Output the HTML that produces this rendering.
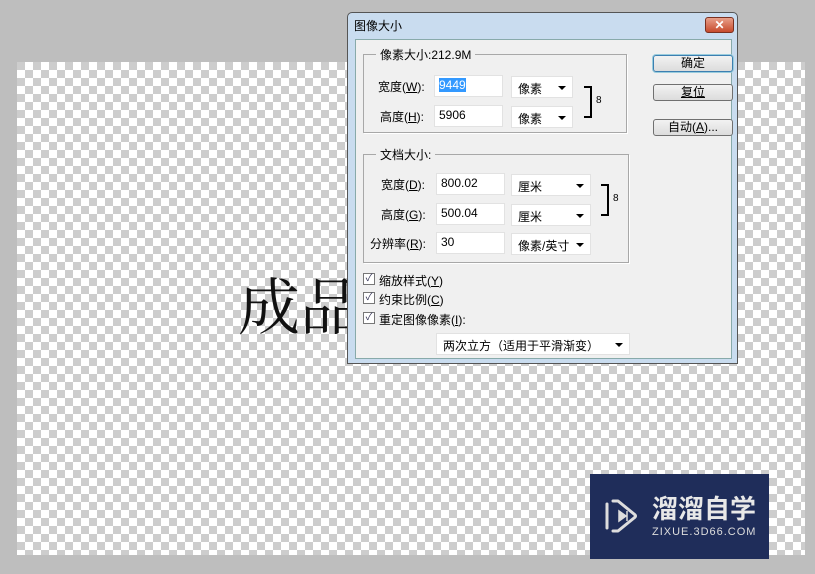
<!DOCTYPE html>
<html><head><meta charset="utf-8"><style>
*{margin:0;padding:0;box-sizing:border-box}
body{width:815px;height:574px;background:#bebebe;position:relative;overflow:hidden;font-family:"Liberation Sans","Noto Sans CJK SC",sans-serif;font-size:12px;color:#000}
.chk{position:absolute;left:17px;top:62px;width:788px;height:493px;background-color:#fff;background-image:linear-gradient(45deg,#cdcdcd 25%,transparent 25%,transparent 75%,#cdcdcd 75%),linear-gradient(45deg,#cdcdcd 25%,transparent 25%,transparent 75%,#cdcdcd 75%);background-size:16px 16px;background-position:8px 0,0 8px}
.big{position:absolute;left:238px;top:268px;font-family:"Noto Serif CJK SC",serif;font-size:62px;line-height:70px;color:#111}
.dlg{position:absolute;left:347px;top:12px;width:391px;height:352px;background:#c9dcef;border:1px solid #555;border-radius:5px 5px 0 0}
.title{position:absolute;left:6px;top:4px;font-size:12px}
.close{position:absolute;left:357px;top:4px;width:29px;height:16px;background:linear-gradient(#e8a08a,#c74a2c);border:1px solid #7a3020;border-radius:3px;color:#fff;font-weight:bold;text-align:center;line-height:14px;font-size:12px}
.in{position:absolute;left:7px;top:26px;width:377px;height:320px;background:#f0f0f0;border:1px solid #8aa}
.a{position:absolute;white-space:nowrap}
.grp{position:absolute;border:1px solid #a8a8a8;box-shadow:1px 1px 0 #fff}
.lg{position:absolute;background:#f0f0f0;padding:0 4px;top:-9px;left:12px}
.tx{position:absolute;width:69px;height:22px;background:#fff;border:1px solid #e2e2e2;padding:2px 4px;font-size:12px}
.sel{position:absolute;height:22px;background:#fff;border:1px solid #e2e2e2;padding:3px 6px}
.sel:after{content:"";position:absolute;right:6px;top:9px;border:4px solid transparent;border-top:4px solid #000;border-bottom:0}
.btn{position:absolute;left:297px;width:80px;height:17px;border:1px solid #707070;border-radius:3px;background:linear-gradient(#f2f2f2,#dcdcdc);text-align:center;line-height:15px}
.cb{position:absolute;width:12px;height:12px;border:1px solid #777;background:#fff;font-size:10px;line-height:10px;text-align:center;color:#335}
.br{position:absolute;border:2px solid #000;border-left:none;width:8px}
u{text-decoration:underline}
</style></head><body>
<div class="chk"></div>
<div class="big">成品</div>
<div class="dlg">
<div class="title">图像大小</div>
<div class="close">✕</div>
<div class="in">
 <div class="grp" style="left:7px;top:14px;width:264px;height:79px"><span class="lg">像素大小:212.9M</span></div>
 <div class="a" style="left:22px;top:38px">宽度(<u>W</u>):</div>
 <div class="tx" style="left:78px;top:35px;"><span style="background:#3399ff;color:#fff">9449</span></div>
 <div class="sel" style="left:155px;top:36px;width:62px">像素</div>
 <div class="a" style="left:24px;top:68px">高度(<u>H</u>):</div>
 <div class="tx" style="left:78px;top:65px">5906</div>
 <div class="sel" style="left:155px;top:66px;width:62px">像素</div>
 <div class="br" style="left:228px;top:46px;height:32px"></div>
 <div class="a" style="left:240px;top:55px;font-size:10px">8</div>

 <div class="grp" style="left:7px;top:114px;width:266px;height:109px"><span class="lg">文档大小:</span></div>
 <div class="a" style="left:25px;top:136px">宽度(<u>D</u>):</div>
 <div class="tx" style="left:80px;top:133px">800.02</div>
 <div class="sel" style="left:155px;top:134px;width:80px">厘米</div>
 <div class="a" style="left:25px;top:166px">高度(<u>G</u>):</div>
 <div class="tx" style="left:80px;top:163px">500.04</div>
 <div class="sel" style="left:155px;top:164px;width:80px">厘米</div>
 <div class="br" style="left:245px;top:144px;height:32px"></div>
 <div class="a" style="left:257px;top:153px;font-size:10px">8</div>
 <div class="a" style="left:14px;top:195px">分辨率(<u>R</u>):</div>
 <div class="tx" style="left:80px;top:192px">30</div>
 <div class="sel" style="left:155px;top:193px;width:80px">像素/英寸</div>

 <div class="cb" style="left:7px;top:233px">✓</div><div class="a" style="left:23px;top:232px">缩放样式(<u>Y</u>)</div>
 <div class="cb" style="left:7px;top:252px">✓</div><div class="a" style="left:23px;top:251px">约束比例(<u>C</u>)</div>
 <div class="cb" style="left:7px;top:272px">✓</div><div class="a" style="left:23px;top:271px">重定图像像素(<u>I</u>):</div>
 <div class="sel" style="left:80px;top:293px;width:194px">两次立方（适用于平滑渐变）</div>

 <div class="btn" style="top:15px;border-color:#3c7fb1;box-shadow:0 0 0 1px #9cd">确定</div>
 <div class="btn" style="top:44px"><u>复位</u></div>
 <div class="btn" style="top:79px">自动(<u>A</u>)...</div>
</div>
</div>
<div style="position:absolute;left:590px;top:474px;width:179px;height:85px;background:#1f2d5a"></div>
<svg style="position:absolute;left:604px;top:496px" width="36" height="40" viewBox="0 0 36 40"><path d="M3 8 V32 M9 5 H14 L30 18 Q33 20 30 22 L14 35 H9" fill="none" stroke="#ddd" stroke-width="3" stroke-linecap="round" stroke-linejoin="round"/><path d="M15 15 L22 20 L15 25Z M23 15 V25" fill="#ddd" stroke="#ddd" stroke-width="1.5"/></svg>
<div class="a" style="left:652px;top:494px;color:#e8e8e8;font-size:26px;font-weight:bold;line-height:30px">溜溜自学</div>
<div class="a" style="left:652px;top:526px;color:#ddd;font-size:11px;letter-spacing:1px">ZIXUE.3D66.COM</div>
</body></html>
